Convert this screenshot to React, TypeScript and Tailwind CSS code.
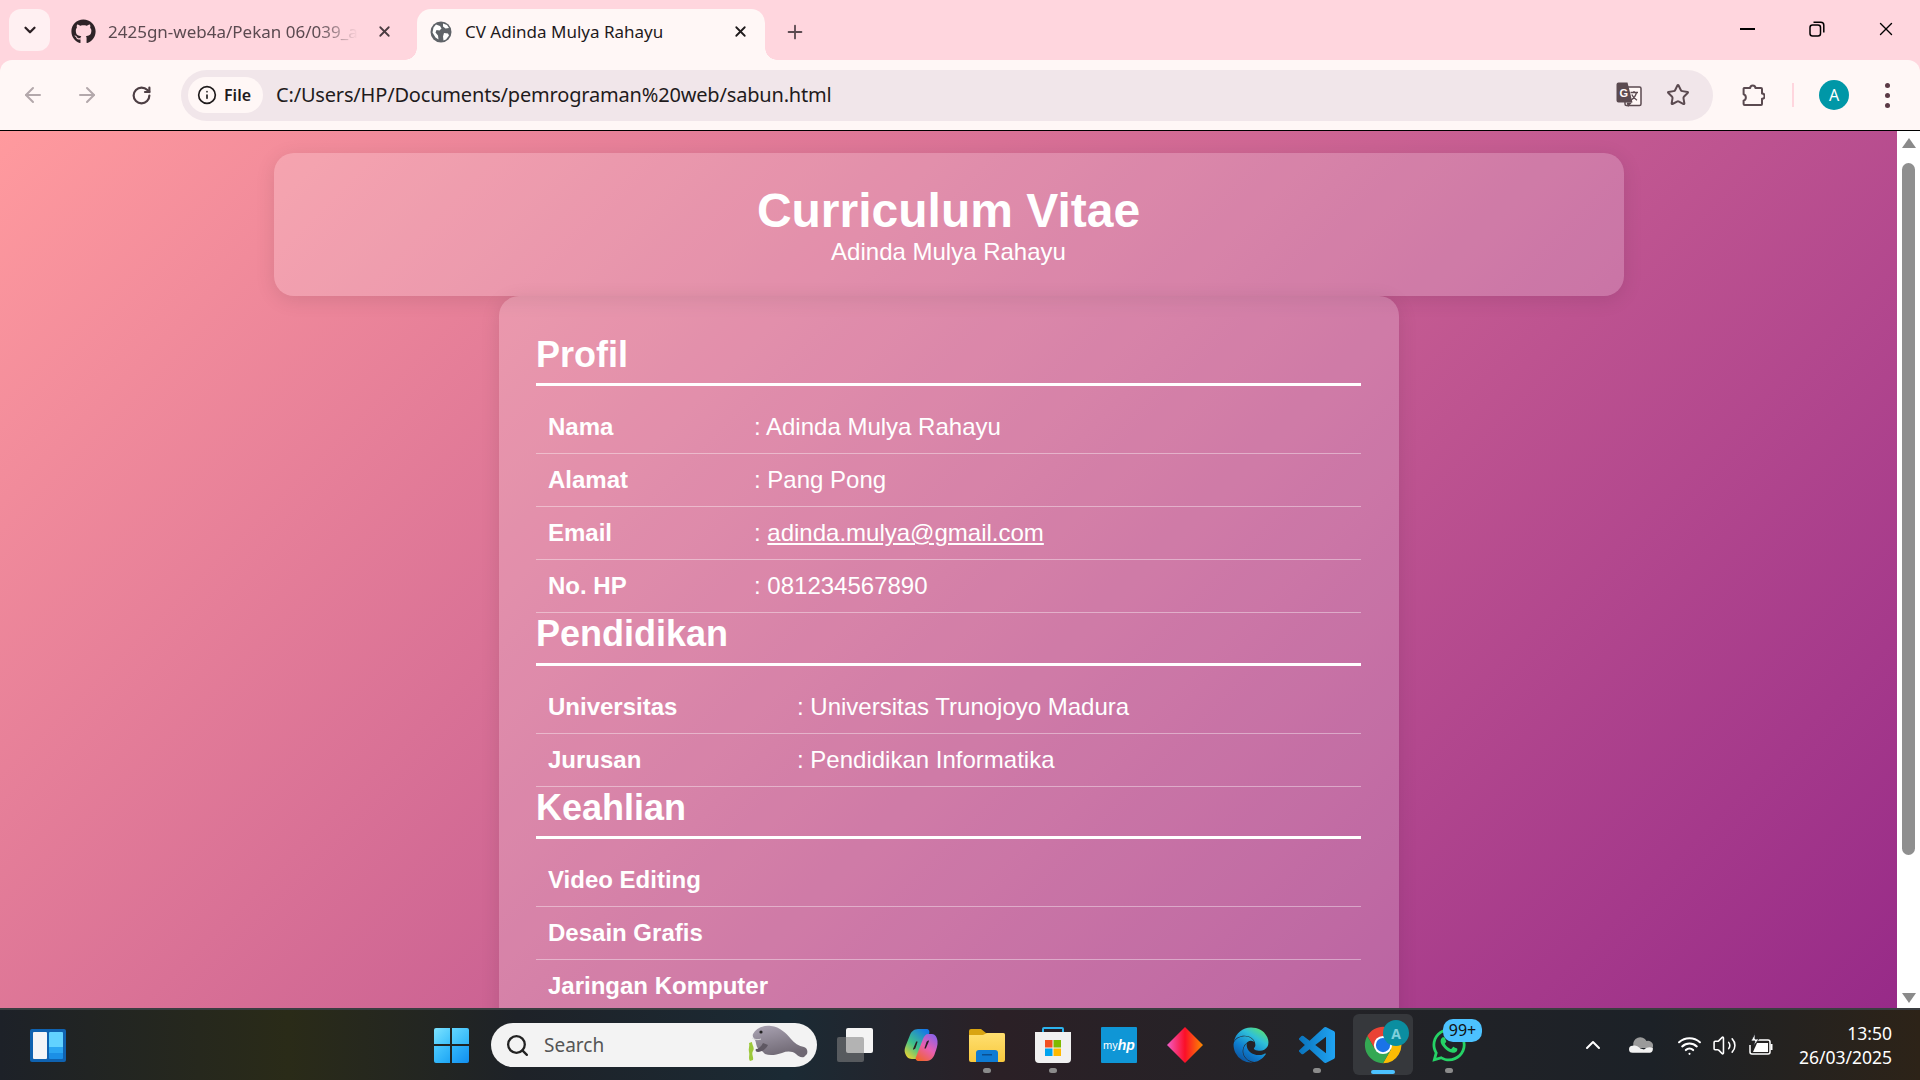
import React from 'react';
import { ArrowLeft, ArrowRight, ChevronDown, ChevronUp, Info, Plus, RotateCw, Search, Star, Volume2, Wifi, X } from 'lucide-react';
import { FaEdge, FaGithub, FaWhatsapp } from 'react-icons/fa';

const chromeFont = "font-['Noto_Sans',sans-serif]";

const profil = [
  { label: 'Nama', value: 'Adinda Mulya Rahayu' },
  { label: 'Alamat', value: 'Pang Pong' },
  { label: 'Email', value: 'adinda.mulya@gmail.com', link: true },
  { label: 'No. HP', value: '081234567890' },
];

const pendidikan = [
  { label: 'Universitas', value: 'Universitas Trunojoyo Madura' },
  { label: 'Jurusan', value: 'Pendidikan Informatika' },
];

const keahlian = ['Video Editing', 'Desain Grafis', 'Jaringan Komputer'];

const Gradients = () => (
  <svg className="absolute w-0 h-0">
    <defs>
      <linearGradient id="edge" x1="0.85" y1="0" x2="0.2" y2="1">
        <stop offset="0" stopColor="#5fe36a" />
        <stop offset="0.3" stopColor="#2fc0d8" />
        <stop offset="0.65" stopColor="#0f7fd0" />
        <stop offset="1" stopColor="#0c4f9a" />
      </linearGradient>
      <linearGradient id="vscode" x1="0" y1="0.5" x2="1" y2="0.5">
        <stop offset="0" stopColor="#0a74bd" />
        <stop offset="1" stopColor="#20a4f3" />
      </linearGradient>
      <linearGradient id="diamond" x1="0" y1="0" x2="1" y2="0">
        <stop offset="0" stopColor="#f25cc8" />
        <stop offset="0.5" stopColor="#fb0f28" />
        <stop offset="1" stopColor="#fb8a00" />
      </linearGradient>
      <linearGradient id="copilotA" x1="0.1" y1="1" x2="0.8" y2="0">
        <stop offset="0" stopColor="#f6d32c" />
        <stop offset="0.45" stopColor="#3fc28a" />
        <stop offset="1" stopColor="#1577e8" />
      </linearGradient>
      <linearGradient id="copilotB" x1="0.2" y1="1" x2="0.8" y2="0">
        <stop offset="0" stopColor="#f0642e" />
        <stop offset="0.5" stopColor="#e95fb0" />
        <stop offset="1" stopColor="#8a63e8" />
      </linearGradient>
      <linearGradient id="folder" x1="0" y1="0" x2="0" y2="1">
        <stop offset="0" stopColor="#ffdf70" />
        <stop offset="1" stopColor="#f8c93e" />
      </linearGradient>
      <linearGradient id="manatee" x1="0" y1="0" x2="0.4" y2="1">
        <stop offset="0" stopColor="#aba4b4" />
        <stop offset="1" stopColor="#6f6873" />
      </linearGradient>
    </defs>
  </svg>
);

const RestoreIcon = () => (
  <svg width="16" height="16" viewBox="0 0 16 16" fill="none" stroke="#000" strokeWidth="1.5">
    <rect x="1" y="4" width="10.5" height="11" rx="2.5" />
    <path d="M4.5 1.2h7.3a3 3 0 0 1 3 3v7.3" />
  </svg>
);

const GlobeIcon = () => (
  <svg width="22" height="22" viewBox="0 0 22 22">
    <circle cx="11" cy="11" r="10.5" fill="#5f6368" />
    <path d="M6 3.5l4 1.5 1.5 2.5-2 2-3-.5-1 2.5 2.5 3 .5 4-3-2-3-5 1-5zM14 12l4 .5 1 2-3 4-2.5 1-.5-4z" fill="#fff" />
    <path d="M13 2.5l4 1.5 2 3-3.5.5-2.5-2z" fill="#fff" />
  </svg>
);

const TranslateIcon = () => (
  <svg width="26" height="26" viewBox="0 0 26 26">
    <rect x="9" y="5" width="16" height="18.5" rx="1.5" fill="#fff7f6" stroke="#5b4a50" strokeWidth="1.5" />
    <path d="M2.5 0.5h9l5 20H2.5a2 2 0 0 1-2-2v-16a2 2 0 0 1 2-2z" fill="#5b4a50" />
    <path d="M10.5 20.5l1.5 4.5 4-4.5z" fill="#5b4a50" />
    <text x="3.5" y="15" fontSize="11" fontWeight="700" fill="#fff7f6" fontFamily="'Liberation Sans',sans-serif">G</text>
    <path d="M14.5 10.5h7.5M18 9v1.5M20.5 10.5c-.8 3.5-2.8 6-5.5 7.5M15.8 12.5c1 2.4 2.8 4.4 5.2 5.8" fill="none" stroke="#5b4a50" strokeWidth="1.3" />
  </svg>
);

const PuzzleIcon = () => (
  <svg width="24" height="24" viewBox="0 0 24 24" fill="none" stroke="#5b4a50" strokeWidth="2" strokeLinejoin="round">
    <path d="M3 5h6.2a2.6 2.6 0 0 1 5.2 0H20a1 1 0 0 1 1 1v4.6a2.6 2.6 0 0 1 0 5.2V21a1 1 0 0 1-1 1H3.6a1 1 0 0 1-1-1v-3.4a3.4 3.4 0 0 0 0-6.4V6a1 1 0 0 1 .4-1z" />
  </svg>
);

const WindowsLogo = () => (
  <div className="grid grid-cols-2 gap-[2px] w-[35px] h-[35px]">
    <div className="bg-[linear-gradient(135deg,#7de3ff,#3cc0fb)] rounded-tl-[2px]" />
    <div className="bg-[linear-gradient(135deg,#62d6ff,#2fb4f8)] rounded-tr-[2px]" />
    <div className="bg-[linear-gradient(135deg,#4ccafe,#1da5f5)] rounded-bl-[2px]" />
    <div className="bg-[linear-gradient(135deg,#33b8fb,#118ff0)] rounded-br-[2px]" />
  </div>
);

const WidgetsIcon = () => (
  <div className="flex gap-[2px] w-[36px] h-[33px] bg-[#0f62b0] rounded-[2px] p-[3px]">
    <div className="w-[14px] bg-[#f4f5f7] rounded-[1px]" />
    <div className="flex-1 flex flex-col rounded-[1px] overflow-hidden">
      <div className="h-[15px] bg-[#62d2ff]" />
      <div className="h-[6px] bg-[#2ba6f2]" />
      <div className="flex-1 bg-[#1b8fe6]" />
    </div>
  </div>
);

const Manatee = () => (
  <svg width="64" height="42" viewBox="0 0 64 42">
    <path d="M4 19c1 3-1 6 0 9s-1 6 1 9l3-1c1-3-2-6 0-9s-1-6-1-9z" fill="#9cc83a" />
    <path d="M8 10c3-6 10-9 18-8 9 1 15 7 20 13 3 4 8 7 13 8 3 1 4 4 3 7l-3 3c-3 1-6-1-8-3-4-3-9-3-14-1-6 2-12 3-17 1l-3-3c-2-1-4-2-5-4-1-3-1-5-2-7-1-2-3-3-2-6z" fill="url(#manatee)" />
    <path d="M18 19c-2 4-5 6-7 6-1 1 0 3 2 3 4 0 8-3 10-7z" fill="#5f5863" />
    <circle cx="16" cy="8" r="1.6" fill="#222" />
    <path d="M7 14c3 2 7 2 9 1" stroke="#ddd" strokeWidth="1" fill="none" />
  </svg>
);

const TaskView = () => (
  <div className="relative w-[36px] h-[34px]">
    <div className="absolute right-0 top-0 w-[27px] h-[25px] bg-[#f4f4f4] rounded-[2px]" />
    <div className="absolute left-0 bottom-0 w-[27px] h-[25px] bg-[rgba(130,130,130,0.57)] rounded-[2px]" />
  </div>
);

const Copilot = () => (
  <svg width="34" height="34" viewBox="0 0 34 34">
    <path d="M14 1h8c3 0 4 2 3 5l-7 21c-1 3-3 4-6 4H8c-4 0-6-3-7-6-1-3 0-5 1-8l4-10c1-3 4-6 8-6z" fill="url(#copilotA)" />
    <path d="M24 6h4c3 0 5 3 5.5 7 .5 4-1 8-2.5 12-1 4-4 8-8 8h-8c-3 0-4-2-3-4l7-18c1-3 3-5 5-5z" fill="url(#copilotB)" />
    <path d="M9 21l3-7c.5-1 1.5-1 1.5 0l-2 6c-.5 1.5-3 2-2.500 1zM25 13l-3 7c-.5 1-1.500 1-1.500 0l2-6c.5-1.500 3-2 2.500-1z" fill="#2b2026" />
  </svg>
);

const FolderIcon = () => (
  <svg width="36" height="33" viewBox="0 0 36 33">
    <path d="M0 2a2 2 0 0 1 2-2h10l5 4H34a2 2 0 0 1 2 2v6H0z" fill="#d9a411" />
    <path d="M0 6h14l4-2h16a2 2 0 0 1 2 2v25a2 2 0 0 1-2 2H2a2 2 0 0 1-2-2z" fill="url(#folder)" />
    <path d="M7 33V24a3 3 0 0 1 3-3h16a3 3 0 0 1 3 3v9z" fill="#0f7bd4" />
    <rect x="13" y="25" width="10" height="1.5" fill="#0a4f90" />
  </svg>
);

const StoreIcon = () => (
  <svg width="36" height="37" viewBox="0 0 36 37">
    <path d="M8 6V2a1 1 0 0 1 1-1h18a1 1 0 0 1 1 1v4" fill="none" stroke="#2cb3ee" strokeWidth="2" />
    <path d="M0 5h36v27a4 4 0 0 1-4 4H4a4 4 0 0 1-4-4z" fill="#f1f1f1" />
    <rect x="10" y="13" width="7.5" height="7.5" fill="#f25022" />
    <rect x="18.5" y="13" width="7.5" height="7.5" fill="#7fba00" />
    <rect x="10" y="21.5" width="7.5" height="7.5" fill="#00a4ef" />
    <rect x="18.5" y="21.5" width="7.5" height="7.5" fill="#ffb900" />
  </svg>
);

const HpIcon = () => (
  <div className="w-[36px] h-[36px] bg-[#0f96d6] flex items-center justify-center font-['Liberation_Sans',sans-serif] text-white text-[11px] rounded-[1px]">
    my<span className="italic font-bold text-[14px]">hp</span>
  </div>
);

const Diamond = () => (
  <svg width="36" height="36" viewBox="0 0 36 36">
    <polygon points="18,0 36,18 18,36 0,18" fill="url(#diamond)" />
  </svg>
);

const VsCodeIcon = () => (
  <svg width="36" height="36" viewBox="0 0 24 24" fill="url(#vscode)">
    <path d="M23.15 2.587L18.21.21a1.494 1.494 0 0 0-1.705.29l-9.46 8.63-4.12-3.128a.999.999 0 0 0-1.276.057L.327 7.261A1 1 0 0 0 .326 8.74L3.899 12 .326 15.26a1 1 0 0 0 .001 1.479L1.65 17.94a.999.999 0 0 0 1.276.057l4.12-3.128 9.46 8.63a1.492 1.492 0 0 0 1.704.29l4.942-2.377A1.5 1.5 0 0 0 24 20.06V3.939a1.5 1.5 0 0 0-.85-1.352zm-5.146 14.861L10.826 12l7.178-5.448v10.896z" />
  </svg>
);

const ChromeIcon = () => (
  <svg width="38" height="38" viewBox="0 0 48 48">
    <path d="M24 12.5H44A23 23 0 0 0 4.2 12.5L14 29.75z" fill="#ea4335" />
    <path d="M44 12.5A23 23 0 0 1 24 47L34 29.75 24 12.5z" fill="#fbbc04" />
    <path d="M24 47A23 23 0 0 1 4.2 12.5L14 29.75H34z" fill="#34a853" />
    <circle cx="24" cy="24" r="11.5" fill="#fff" />
    <circle cx="24" cy="24" r="9" fill="#1a73e8" />
  </svg>
);

const OneDrive = () => (
  <svg width="24" height="16" viewBox="0 0 24 16">
    <path d="M4.5 9a7 7 0 0 1 13-5 5 5 0 0 1 6 7H4z" fill="#9a9a9a" />
    <path d="M3.5 15.8a3.5 3.5 0 0 1 0-7c3-1 5 .5 8 2.7l3.5 1c3-2.5 6-2.7 8.8-1.5.5 2.5-1 4.8-3 4.8z" fill="#f2f2f2" />
  </svg>
);

const BatteryIcon = () => (
  <svg width="25" height="24" viewBox="0 0 25 24" fill="none" stroke="#fff" strokeWidth="1.5">
    <path d="M7 7h13a2 2 0 0 1 2 2v10a2 2 0 0 1-2 2H4a2 2 0 0 1-2-2v-7" />
    <path d="M5 19h15l0-9H9z" fill="#fff" stroke="none" />
    <path d="M23.5 11v6" strokeWidth="2" />
    <path d="M7 0.5L3 8h4l-1.5 5L11 6H7z" fill="#fff" stroke="#202226" strokeWidth="0.8" />
  </svg>
);

const Dot = () => <span className="absolute bottom-[7px] left-1/2 -translate-x-1/2 w-[8px] h-[5px] rounded-full bg-[#8b8b8b]" />;

const TaskSlot = ({ children, dot }: { children: React.ReactNode; dot?: boolean }) => (
  <div className="relative w-[66px] h-full flex items-center justify-center">
    {children}
    {dot && <Dot />}
  </div>
);

const TabBar = () => (
  <div className={`h-[60px] flex items-end bg-[#ffd6de] shrink-0 ${chromeFont}`}>
    <div className="ml-[9px] mb-[9px] w-[41px] h-[42px] rounded-[12px] bg-[#fff0f2] flex items-center justify-center">
      <ChevronDown size={18} strokeWidth={3} className="text-[#2b1f23]" />
    </div>
    <div className="w-[367px] h-[51px] flex items-center pl-[21px] pb-[6px]">
      <FaGithub size={25} className="text-[#2e2327] shrink-0" />
      <span className="ml-[12px] w-[250px] overflow-hidden whitespace-nowrap text-[17px] text-[#5b4a50] [mask-image:linear-gradient(90deg,#000_84%,transparent)]">
        2425gn-web4a/Pekan 06/039_adinda
      </span>
      <X size={17} strokeWidth={2.5} className="ml-[18px] text-[#4a3c41]" />
    </div>
    <div className="relative w-[348px] h-[51px] rounded-t-[14px] bg-[#fff7f6] flex items-center pl-[13px] pb-[6px]">
      <span className="absolute bottom-0 -left-[12px] w-[12px] h-[12px] bg-[radial-gradient(circle_at_0_0,transparent_11.5px,#fff7f6_12px)]" />
      <span className="absolute bottom-0 -right-[12px] w-[12px] h-[12px] bg-[radial-gradient(circle_at_100%_0,transparent_11.5px,#fff7f6_12px)]" />
      <GlobeIcon />
      <span className="ml-[13px] text-[17px] text-[#1f1b1c] whitespace-nowrap">CV Adinda Mulya Rahayu</span>
      <X size={17} strokeWidth={2.5} className="absolute right-[16px] top-[14px] text-[#1f1b1c]" />
    </div>
    <div className="w-[60px] h-[51px] flex items-center justify-center pb-[6px]">
      <Plus size={22} strokeWidth={2} className="text-[#5b4a50]" />
    </div>
    <div className="ml-auto h-[60px] flex items-center pb-[2px]">
      <div className="w-[69px] flex justify-center"><div className="w-[15px] h-[2px] bg-black" /></div>
      <div className="w-[69px] flex justify-center"><RestoreIcon /></div>
      <div className="w-[69px] flex justify-center"><X size={22} strokeWidth={1.5} className="text-black" /></div>
    </div>
  </div>
);

const ToolBar = () => (
  <div className="bg-[#ffd6de] shrink-0">
    <div className={`h-[70px] rounded-t-[12px] bg-[#fff7f6] flex items-center pl-[11px] ${chromeFont}`}>
      <div className="w-[44px] flex justify-center"><ArrowLeft size={24} strokeWidth={2} className="text-[#b3a8ab]" /></div>
      <div className="ml-[10px] w-[44px] flex justify-center"><ArrowRight size={24} strokeWidth={2} className="text-[#b3a8ab]" /></div>
      <div className="ml-[10px] w-[44px] flex justify-center"><RotateCw size={21} strokeWidth={2.5} className="text-[#4e3f44]" /></div>
      <div className="ml-[18px] w-[1532px] h-[51px] rounded-full bg-[#f1e6ea] flex items-center pl-[7px] pr-[23px]">
        <div className="w-[75px] h-[36px] rounded-full bg-[#fff7f6] flex items-center pl-[9px] gap-[7px]">
          <Info size={20} strokeWidth={2} className="text-[#1f1b1c]" />
          <span className="text-[16px] font-semibold text-[#1f1b1c]">File</span>
        </div>
        <span className="ml-[13px] text-[20px] tracking-[-0.18px] text-[#1f1b1c]">C:/Users/HP/Documents/pemrograman%20web/sabun.html</span>
        <div className="ml-auto flex items-center gap-[24px]">
          <TranslateIcon />
          <Star size={24} strokeWidth={2} className="text-[#5b4a50]" />
        </div>
      </div>
      <div className="ml-[28px]"><PuzzleIcon /></div>
      <div className="ml-[27px] w-[2px] h-[24px] bg-[#ffd6de]" />
      <div className="ml-[25px] w-[30px] h-[30px] rounded-full bg-[#0097a7] text-white text-[16px] flex items-center justify-center">A</div>
      <div className="ml-[36px] flex flex-col gap-[5px]">
        <span className="w-[5px] h-[5px] rounded-full bg-[#5b3a45]" />
        <span className="w-[5px] h-[5px] rounded-full bg-[#5b3a45]" />
        <span className="w-[5px] h-[5px] rounded-full bg-[#5b3a45]" />
      </div>
    </div>
    <div className="h-px bg-black" />
  </div>
);

const SectionTitle = ({ children, gap }: { children: React.ReactNode; gap: string }) => (
  <h2 className={`text-[36px] leading-[41px] font-bold border-b-[3px] border-white ${gap}`}>{children}</h2>
);

const Row = ({ label, value, link, labelWidth }: { label: string; value?: string; link?: boolean; labelWidth?: string }) => (
  <div className="flex h-[53px] pt-[12px] px-[12px] border-b border-white/40 text-[24px] leading-[28px]">
    <div className={`font-bold ${labelWidth ?? ''}`}>{label}</div>
    {value && (
      <div>
        : {link ? <a className="underline">{value}</a> : value}
      </div>
    )}
  </div>
);

const CvPage = () => (
  <div className="flex-1 min-w-0 bg-[linear-gradient(135deg,#ff9a9e,#972a88)] pt-[22px] text-white font-['Liberation_Sans',sans-serif]">
    <header className="w-[1350px] mx-auto h-[143px] pt-[30px] rounded-[20px] bg-white/20 shadow-[0_4px_20px_rgba(0,0,0,0.1)] text-center">
      <h1 className="text-[48px] leading-[55px] font-bold">Curriculum Vitae</h1>
      <p className="text-[24px] leading-[28px]">Adinda Mulya Rahayu</p>
    </header>
    <main className="w-[900px] mx-auto px-[37.5px] pt-[38px] pb-[40px] rounded-[20px] bg-white/20 shadow-[0_4px_20px_rgba(0,0,0,0.1)]">
      <SectionTitle gap="pb-[8px] mb-[15px]">Profil</SectionTitle>
      {profil.map((r) => (
        <Row key={r.label} label={r.label} value={r.value} link={r.link} labelWidth="w-[206px]" />
      ))}
      <SectionTitle gap="pb-[9px] mb-[15px]">Pendidikan</SectionTitle>
      {pendidikan.map((r) => (
        <Row key={r.label} label={r.label} value={r.value} labelWidth="w-[249px]" />
      ))}
      <SectionTitle gap="pb-[8px] mb-[15px]">Keahlian</SectionTitle>
      {keahlian.map((k) => (
        <Row key={k} label={k} />
      ))}
    </main>
  </div>
);

const ScrollBar = () => (
  <div className="w-[23px] bg-white flex flex-col items-center shrink-0">
    <div className="mt-[7px] w-0 h-0 border-x-[7px] border-x-transparent border-b-[10px] border-b-[#8a8a8a]" />
    <div className="mt-[15px] w-[13px] h-[692px] rounded-full bg-[#8f8f8f]" />
    <div className="mt-auto mb-[5px] w-0 h-0 border-x-[7px] border-x-transparent border-t-[10px] border-t-[#8a8a8a]" />
  </div>
);

const TaskBar = () => (
  <div className={`h-[72px] shrink-0 border-t-2 border-[#3a3d40] bg-[linear-gradient(90deg,#1d2128_0%,#2a2b18_15%,#1e2228_27%,#1b2a34_41%,#2b2026_52%,#242327_68%,#1c2127_86%,#2d2318_100%)] flex items-center text-white ${chromeFont}`}>
    <div className="ml-[30px]"><WidgetsIcon /></div>
    <div className="ml-[352px] h-full"><TaskSlot><WindowsLogo /></TaskSlot></div>
    <div className="ml-[7px] w-[326px] h-[44px] rounded-full bg-[#f3f3f3] flex items-center pl-[14px] overflow-hidden">
      <Search size={25} strokeWidth={2.2} className="text-[#222]" />
      <span className="ml-[14px] text-[19px] text-[#555]">Search</span>
      <div className="ml-auto mr-[8px]"><Manatee /></div>
    </div>
    <div className="ml-[5px] h-full flex">
      <TaskSlot><TaskView /></TaskSlot>
      <TaskSlot><Copilot /></TaskSlot>
      <TaskSlot dot><FolderIcon /></TaskSlot>
      <TaskSlot dot><StoreIcon /></TaskSlot>
      <TaskSlot><HpIcon /></TaskSlot>
      <TaskSlot><Diamond /></TaskSlot>
      <TaskSlot><FaEdge size={36} className="fill-[url(#edge)]" /></TaskSlot>
      <TaskSlot dot><VsCodeIcon /></TaskSlot>
      <TaskSlot>
        <div className="absolute left-[3px] right-[3px] top-[4px] bottom-[5px] rounded-[6px] bg-[#36383c]" />
        <div className="relative"><ChromeIcon /></div>
        <div className="absolute top-[10px] left-[33px] w-[26px] h-[26px] rounded-full bg-[#0b8ea0] text-[#7fd0dc] text-[14px] font-bold flex items-center justify-center">A</div>
        <div className="absolute bottom-[6px] left-[21px] w-[24px] h-[4px] rounded-full bg-[#4cc2ff]" />
      </TaskSlot>
      <TaskSlot dot>
        <FaWhatsapp size={38} className="text-[#25d366]" />
        <div className="absolute top-[9px] left-[27px] w-[39px] h-[23px] rounded-[10px] bg-[#4cc2ff] text-[#111] text-[16px] leading-[23px] text-center">99+</div>
      </TaskSlot>
    </div>
    <div className="ml-[99px] flex items-center">
      <ChevronUp size={24} strokeWidth={2} className="text-white" />
      <div className="ml-[24px]"><OneDrive /></div>
      <Wifi size={25} strokeWidth={2} className="ml-[24px] text-white" />
      <Volume2 size={25} strokeWidth={1.5} className="ml-[10px] text-white" />
      <div className="ml-[11px]"><BatteryIcon /></div>
    </div>
    <div className="ml-auto mr-[28px] text-right text-[17.5px] leading-[24px] whitespace-nowrap">
      <div>13:50</div>
      <div>26/03/2025</div>
    </div>
  </div>
);

export default function App() {
  return (
    <div className="relative h-screen w-full flex flex-col overflow-hidden">
      <Gradients />
      <TabBar />
      <ToolBar />
      <div className="flex-1 min-h-0 flex overflow-hidden">
        <CvPage />
        <ScrollBar />
      </div>
      <TaskBar />
    </div>
  );
}
